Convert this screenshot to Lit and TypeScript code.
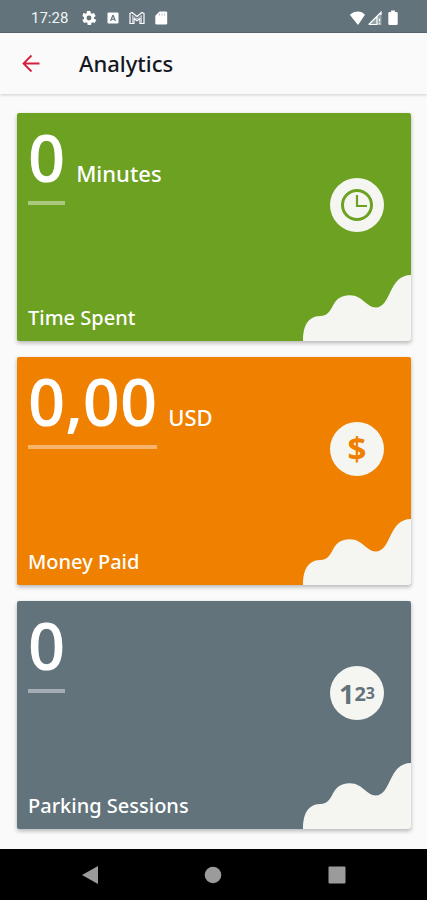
import { LitElement, html, svg, css, TemplateResult } from "lit";
import { customElement, property } from "lit/decorators.js";

type Icon = "clock" | "dollar" | "count";

const icons: Record<Icon, TemplateResult> = {
  clock: svg`
    <circle cx="27" cy="27" r="14.500" fill="none" stroke="currentColor" stroke-width="3" />
    <path d="M27 17V28H37" fill="none" stroke="currentColor" stroke-width="2.200" />`,
  dollar: svg`<text x="27" y="39" text-anchor="middle" font-size="33">$</text>`,
  count: svg`<text x="27" y="38" text-anchor="middle" font-size="27">1<tspan dy="-3" font-size="20">2</tspan><tspan dy="-2" font-size="16">3</tspan></text>`,
};

@customElement("stat-card")
export class StatCard extends LitElement {
  @property() value = "0";
  @property() unit = "";
  @property() label = "";
  @property() icon: Icon = "clock";

  static styles = css`
    :host {
      display: flex;
      justify-content: space-between;
      min-height: 228px;
      border-radius: 2px;
      overflow: hidden;
      color: #fff;
      background: var(--tone);
      box-shadow: 0 2px 4px rgba(0, 0, 0, 0.28);
    }
    .info {
      display: flex;
      flex-direction: column;
      justify-content: space-between;
      padding: 8px 0 11px 11px;
    }
    .figure {
      display: flex;
      align-items: baseline;
      gap: 11px;
      margin: 0;
    }
    .value {
      padding-bottom: 7px;
      border-bottom: 4px solid rgba(255, 255, 255, 0.42);
      font-size: 65px;
      line-height: 73px;
      font-weight: 600;
    }
    .unit {
      font-family: "Noto Sans", "Open Sans", sans-serif;
      font-size: 22px;
      line-height: 24px;
      font-weight: 500;
    }
    .label {
      margin: 0;
      font-family: "Noto Sans", "Open Sans", sans-serif;
      font-size: 20px;
      line-height: 24px;
      font-weight: 500;
    }
    .side {
      display: flex;
      flex-direction: column;
      justify-content: space-between;
      width: 108px;
      padding-top: 65px;
    }
    .badge {
      display: block;
      width: 54px;
      height: 54px;
      margin: 0 auto;
      border-radius: 50%;
      background: #f5f6f2;
      color: var(--tone);
      font-weight: 700;
    }
    .badge text {
      fill: currentColor;
    }
    .wave {
      display: block;
      width: 108px;
      height: 66px;
      fill: #f5f6f2;
    }
  `;

  render() {
    return html`
      <div class="info">
        <p class="figure">
          <span class="value">${this.value}</span>
          ${this.unit ? html`<span class="unit">${this.unit}</span>` : ""}
        </p>
        <h2 class="label">${this.label}</h2>
      </div>
      <div class="side">
        <svg class="badge" viewBox="0 0 54 54" aria-hidden="true">${icons[this.icon]}</svg>
        <svg class="wave" viewBox="0 0 327 201" preserveAspectRatio="none" aria-hidden="true">
          <path d="M0 201C0 160 12 126 52 125C100 124 78 62 142 62C180 62 192 99 220 99C268 99 258 0 327 0V201Z" />
        </svg>
      </div>
    `;
  }
}

@customElement("app-root")
export class AppRoot extends LitElement {
  static styles = css`
    :host {
      display: flex;
      flex-direction: column;
      min-height: 100vh;
      background: #fafafa;
      font-family: "Open Sans", "Noto Sans", sans-serif;
    }
    .status {
      display: flex;
      align-items: center;
      justify-content: space-between;
      height: 33px;
      padding: 3px 26px 0 31px;
      box-sizing: border-box;
      border-bottom: 1px solid #57666f;
      background: #62737c;
      color: #fff;
    }
    .group {
      display: flex;
      align-items: center;
    }
    .time {
      margin-right: 5px;
      font: 400 15px/20px Roboto, sans-serif;
      color: #f0f3f4;
    }
    .left {
      gap: 8px;
    }
    .right {
      gap: 2px;
    }
    svg {
      display: block;
      fill: currentColor;
    }
    .bar {
      display: flex;
      align-items: center;
      gap: 36px;
      height: 61px;
      padding: 0 19px 2px;
      box-sizing: border-box;
      box-shadow: 0 1px 3px rgba(0, 0, 0, 0.18);
    }
    button {
      display: grid;
      place-items: center;
      padding: 0;
      border: 0;
      background: none;
      color: inherit;
      cursor: pointer;
    }
    .back {
      width: 24px;
      height: 24px;
      color: #d3203c;
    }
    .title {
      margin: 0;
      font-family: "Noto Sans", "Open Sans", sans-serif;
      font-size: 22px;
      line-height: 30px;
      font-weight: 500;
      color: #15171f;
    }
    main {
      flex: 1;
      display: flex;
      flex-direction: column;
      gap: 16px;
      padding: 19px 16px 20px 17px;
    }
    .time-spent {
      --tone: #6da122;
    }
    .money-paid {
      --tone: #ef8000;
    }
    .sessions {
      --tone: #62737c;
    }
    .nav {
      display: grid;
      grid-template-columns: repeat(3, 1fr);
      height: 51px;
      padding: 0 28px;
      background: #000;
      color: #9b9b9b;
    }
  `;

  render() {
    return html`
      <div class="status">
        <div class="group left">
          <span class="time">17:28</span>
          <svg width="16" height="16" viewBox="0 0 24 24" aria-hidden="true">
            <path d="M19.400 13c.1-.3.1-.6.1-1s0-.7-.1-1l2.300-1.800c.2-.2.3-.5.100-.7l-2.100-3.700c-.1-.2-.4-.3-.7-.2l-2.600 1.100c-.6-.4-1.100-.8-1.800-1l-.4-2.800c0-.3-.2-.5-.5-.5h-4.300c-.3 0-.5.200-.5.500l-.4 2.800c-.6.200-1.200.6-1.800 1l-2.600-1.100c-.3-.1-.5 0-.7.200L2.300 8.500c-.1.200-.1.500.1.700L4.600 11c-.1.300-.1.700-.1 1s0 .7.100 1l-2.200 1.800c-.2.200-.3.500-.1.700l2.100 3.700c.1.200.4.300.7.200l2.600-1.100c.6.400 1.100.8 1.800 1l.4 2.800c0 .3.200.5.500.5h4.300c.3 0 .5-.2.500-.5l.4-2.800c.6-.2 1.200-.6 1.800-1l2.600 1.100c.3.1.5 0 .7-.2l2.100-3.700c.1-.2.1-.5-.1-.7zM12 15.700a3.700 3.700 0 1 1 0-7.400 3.700 3.700 0 0 1 0 7.400z" fill-rule="evenodd" />
          </svg>
          <svg width="16" height="16" viewBox="0 0 16 16" aria-hidden="true">
            <path d="M3.500 2.500h9a1 1 0 0 1 1 1v9a1 1 0 0 1-1 1h-9a1 1 0 0 1-1-1v-9a1 1 0 0 1 1-1zM7.300 5L5 11h1.300l.5-1.300h2.400L9.700 11H11L8.700 5zM8 6.500l.8 2.200H7.200z" fill-rule="evenodd" />
          </svg>
          <svg width="16" height="16" viewBox="0 0 16 16" aria-hidden="true">
            <path d="M1 3.500L3 2.500 8 6.500l5-4 2 1V13.500h-4V8.500L8 10.800 5 8.500v5H1z" fill="none" stroke="currentColor" stroke-width="1.200" />
            <path d="M3.500 13V5.500L8 9l4.500-3.500V13" fill="none" stroke="currentColor" stroke-width="1" opacity=".6" />
          </svg>
          <svg width="16" height="16" viewBox="0 0 16 16" aria-hidden="true">
            <path d="M6.500 1.500H13a1.200 1.200 0 0 1 1.200 1.200v10.600a1.200 1.200 0 0 1-1.200 1.200H3.500a1.200 1.200 0 0 1-1.200-1.200V5.700z" />
            <path d="M6.500 3.500v2M9 3.500v2M11.500 3.500v2" stroke="#62737c" stroke-width=".8" opacity=".6" />
          </svg>
        </div>
        <div class="group right">
          <svg width="17" height="16" viewBox="0 0 17 16" aria-hidden="true">
            <path d="M10 15L1.800 4.800C6.500.3 13.500.3 17 4.800z" />
          </svg>
          <svg width="16" height="16" viewBox="0 0 16 16" aria-hidden="true">
            <path d="M1 15L14.500 1.500V15z" opacity=".35" />
            <path d="M1.800 14.500L14 2.300V5M1.800 14.500H10V6.500M12.500 8.500v3M12.500 13v1.500" fill="none" stroke="currentColor" stroke-width="1.200" />
          </svg>
          <svg width="16" height="16" viewBox="0 0 16 16" aria-hidden="true">
            <path d="M6 .5h4V2h1.500a1.200 1.200 0 0 1 1.200 1.200v10.600a1.200 1.200 0 0 1-1.200 1.200h-7a1.200 1.200 0 0 1-1.200-1.200V3.200A1.200 1.200 0 0 1 4.500 2H6z" />
          </svg>
        </div>
      </div>
      <header class="bar">
        <button class="back" aria-label="Back">
          <svg width="24" height="24" viewBox="0 0 24 24" aria-hidden="true">
            <path d="M12.500 4.500L4.500 12.500l8 8M4.500 12.500H20.500" fill="none" stroke="currentColor" stroke-width="1.800" />
          </svg>
        </button>
        <h1 class="title">Analytics</h1>
      </header>
      <main>
        <stat-card class="time-spent" value="0" unit="Minutes" label="Time Spent" icon="clock"></stat-card>
        <stat-card class="money-paid" value="0,00" unit="USD" label="Money Paid" icon="dollar"></stat-card>
        <stat-card class="sessions" value="0" label="Parking Sessions" icon="count"></stat-card>
      </main>
      <nav class="nav" aria-label="System">
        <button aria-label="Back">
          <svg width="18" height="20" viewBox="0 0 18 20" aria-hidden="true"><path d="M17 1V19L1 10z" /></svg>
        </button>
        <button aria-label="Home">
          <svg width="18" height="18" viewBox="0 0 18 18" aria-hidden="true"><circle cx="9" cy="9" r="8.300" /></svg>
        </button>
        <button aria-label="Recent apps">
          <svg width="18" height="18" viewBox="0 0 18 18" aria-hidden="true"><rect x=".5" y=".5" width="17" height="17" rx="1" /></svg>
        </button>
      </nav>
    `;
  }
}
